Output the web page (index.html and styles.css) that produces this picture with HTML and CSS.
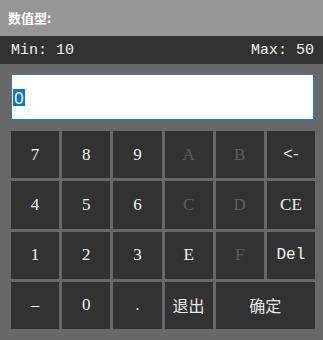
FILE: index.html
```html
<!DOCTYPE html>
<html>
<head>
<meta charset="utf-8">
<link rel="stylesheet" href="styles.css">
</head>
<body>
<div class="title">数值型:</div>
<div class="range"><span>Min: 10</span><span>Max: 50</span></div>
<div class="content">
  <div class="input"><span class="sel">0</span></div>
  <div class="keys">
    <div class="key">7</div>
    <div class="key">8</div>
    <div class="key">9</div>
    <div class="key off">A</div>
    <div class="key off">B</div>
    <div class="key mono tight">&lt;-</div>
    <div class="key">4</div>
    <div class="key">5</div>
    <div class="key">6</div>
    <div class="key off">C</div>
    <div class="key off">D</div>
    <div class="key">CE</div>
    <div class="key">1</div>
    <div class="key">2</div>
    <div class="key">3</div>
    <div class="key">E</div>
    <div class="key off">F</div>
    <div class="key mono">Del</div>
    <div class="key">–</div>
    <div class="key">0</div>
    <div class="key">.</div>
    <div class="key cjk">退出</div>
    <div class="key cjk wide">确定</div>
  </div>
</div>
</body>
</html>
```
FILE: styles.css
```css
html, body {
  margin: 0;
  padding: 0;
  background: #686868;
  width: 323px;
  height: 340px;
  overflow: hidden;
}
.title {
  height: 36px;
  background: #969696;
  color: #fff;
  font-family: "Noto Sans CJK SC", sans-serif;
  font-weight: bold;
  font-size: 13px;
  line-height: 36px;
  padding-left: 8px;
}
.range {
  height: 28px;
  background: #323232;
  color: #f2f2f2;
  display: flex;
  justify-content: space-between;
  align-items: center;
  padding: 0 9px 0 11px;
  font-family: "Liberation Mono", monospace;
  font-size: 15px;
}
.content {
  padding: 10px 8px 10px 11px;
  display: flex;
  flex-direction: column;
  gap: 10px;
}
.input {
  height: 44px;
  background: #fff;
  border: 2px solid #3a74ad;
  border-left-width: 1px;
  border-top-width: 1px;
  display: flex;
  align-items: center;
  padding-left: 1px;
  font-family: "Noto Sans", sans-serif;
  font-size: 17px;
}
.sel {
  background: #0a74d4;
  color: #fff;
  line-height: 17px;
  padding: 0 1px;
}
.keys {
  display: grid;
  grid-template-columns: repeat(6, 1fr);
  grid-template-rows: repeat(4, 1fr);
  gap: 3px 3px;
  height: 198px;
}
.key {
  background: #323232;
  color: #f4f4f4;
  display: flex;
  align-items: center;
  justify-content: center;
  font-family: "Liberation Serif", serif;
  font-size: 17px;
}
.key.off {
  color: #5e5e5e;
}
.key.mono {
  font-family: "Liberation Mono", monospace;
  font-size: 16px;
}
.key.tight {
  letter-spacing: -2px;
}
.key.cjk {
  font-family: "Noto Sans CJK SC", sans-serif;
  font-size: 16px;
  color: #e8e8e8;
}
.key.wide {
  grid-column: span 2;
}
```
